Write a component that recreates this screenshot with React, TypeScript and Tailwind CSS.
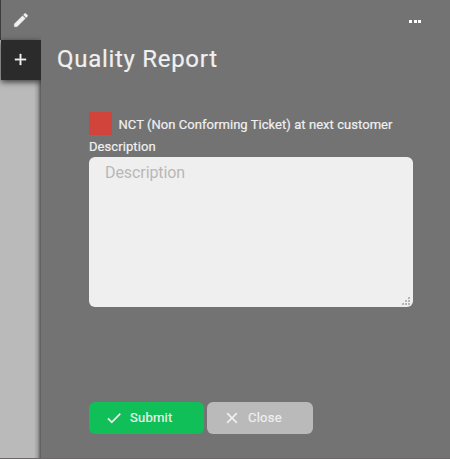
import type { ReactNode } from "react";

function Icon({ path, size = 18 }: { path: string; size?: number }) {
  return (
    <svg width={size} height={size} viewBox="0 0 24 24" fill="currentColor" stroke="currentColor" strokeWidth={0.4}>
      <path d={path} />
    </svg>
  );
}

const pencil =
  "M3 17.25V21h3.75L17.81 9.94l-3.75-3.75L3 17.25zM20.71 7.04a1 1 0 0 0 0-1.41l-2.34-2.34a1 1 0 0 0-1.41 0l-1.83 1.83 3.75 3.75 1.83-1.83z";
const plus = "M19 13h-6v6h-2v-6H5v-2h6V5h2v6h6v2z";
const check = "M9 16.17 4.83 12l-1.42 1.41L9 19 21 7l-1.41-1.41z";
const cross =
  "M19 6.41 17.59 5 12 10.59 6.41 5 5 6.41 10.59 12 5 17.59 6.41 19 12 13.41 17.59 19 19 17.59 13.41 12z";

function ActionButton({ className, icon, label }: { className: string; icon: ReactNode; label: string }) {
  return (
    <button type="button" className={`flex h-8 items-center rounded-md pl-4 text-[13px] tracking-[0.25px] ${className}`}>
      {icon}
      <span className="ml-[7px] [-webkit-text-stroke:0.2px_currentColor]">{label}</span>
    </button>
  );
}

function ResizeGrip() {
  return (
    <svg className="absolute right-[3px] bottom-[2px]" width="8" height="8" fill="#b5b5b5" shapeRendering="crispEdges">
      <path d="M6 0h2v2h-2zM3 3h2v2h-2zM6 3h2v2h-2zM0 6h2v2h-2zM3 6h2v2h-2zM6 6h2v2h-2z" />
    </svg>
  );
}

export default function App() {
  return (
    <div className="flex h-[459px] w-[450px] overflow-hidden border-b border-[#696768] bg-[#737373] font-['Roboto',sans-serif] text-[#f0f0f0]">
      <aside className="flex w-[41px] shrink-0 flex-col bg-[#bababa]">
        <div className="flex h-10 items-center justify-center border-l border-[#3c3c3c] bg-[#737373] pb-px">
          <Icon path={pencil} />
        </div>
        <div className="z-10 ml-px flex h-10 items-center justify-center bg-[#2b2b2b] pr-px pb-px shadow-[0_2px_6px_rgba(0,0,0,0.7)]">
          <Icon path={plus} size={19} />
        </div>
        <div className="flex flex-1 justify-end">
          <div className="w-[7px] bg-linear-to-r from-[#bababa] via-[#a0a0a0] to-[#585858]" />
        </div>
      </aside>
      <main className="z-20 flex min-w-0 flex-1 flex-col bg-[#737373]">
        <header className="flex h-10 items-start justify-end pt-5 pr-[29px]">
          <button type="button" aria-label="More" className="flex gap-[1.5px]">
            <i className="h-[3px] w-[3px] bg-white" />
            <i className="h-[3px] w-[3px] bg-white" />
            <i className="h-[3px] w-[3px] bg-white" />
          </button>
        </header>
        <h1 className="ml-4 text-[24px] leading-[38px] tracking-[0.7px] [-webkit-text-stroke:0.2px_currentColor]">Quality Report</h1>
        <form className="mt-[34px] ml-12 w-[324px] text-[13px]">
          <label className="flex h-[23px] items-center">
            <span className="mr-[7px] size-[23px] bg-[#d0443b]" />
            <span className="mt-[3px] -ml-[0.5px] whitespace-nowrap tracking-[0.05px] [-webkit-text-stroke:0.2px_currentColor]">
              NCT (Non Conforming Ticket) at next customer
            </span>
          </label>
          <label className="block h-[22px] pt-[2px] leading-[20px] tracking-[0.08px] [-webkit-text-stroke:0.2px_currentColor]">
            Description
          </label>
          <div className="relative h-[150px]">
            <textarea
              placeholder="Description"
              className="block size-full resize-none rounded-md bg-[#efefef] px-4 py-1 text-base leading-6 tracking-[-0.08px] placeholder:text-[#b8b8b8]"
            />
            <ResizeGrip />
          </div>
          <div className="mt-[95px] flex gap-[3px]">
            <ActionButton className="w-[115px] bg-[#10bf58]" icon={<Icon path={check} />} label="Submit" />
            <ActionButton className="w-[106px] bg-[#bababa]" icon={<Icon path={cross} />} label="Close" />
          </div>
        </form>
      </main>
    </div>
  );
}
